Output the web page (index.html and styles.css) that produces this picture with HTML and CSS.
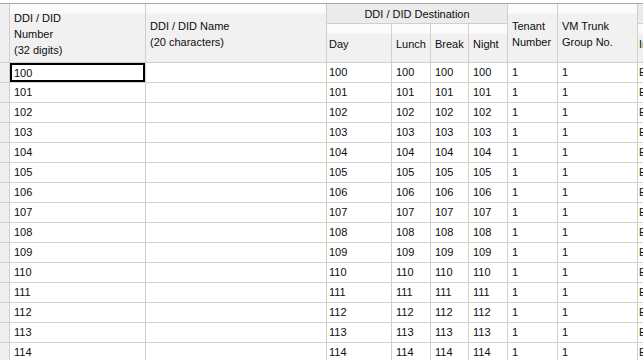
FILE: index.html
```html
<!DOCTYPE html>
<html>
<head>
<meta charset="utf-8">
<link rel="stylesheet" href="styles.css">
</head>
<body>
<div class="sheet">
  <div class="gut hdr span2"></div>
  <div class="hdr span2">DDI / DID<br>Number<br>(32 digits)</div>
  <div class="hdr span2">DDI / DID Name<br>(20 characters)</div>
  <div class="grp span4c">DDI / DID Destination</div>
  <div class="hdr span2">Tenant<br>Number</div>
  <div class="hdr span2">VM Trunk<br>Group No.</div>
  <div class="grp">&nbsp;</div>
  <div class="hdr day">Day</div>
  <div class="hdr">Lunch</div>
  <div class="hdr">Break</div>
  <div class="hdr">Night</div>
  <div class="hdr last">Intercept</div>

  <div class="gut"></div><div class="c sel">100</div><div class="c"></div><div class="c day">100</div><div class="c">100</div><div class="c">100</div><div class="c">100</div><div class="c">1</div><div class="c">1</div><div class="c last">Enable</div>
  <div class="gut"></div><div class="c">101</div><div class="c"></div><div class="c day">101</div><div class="c">101</div><div class="c">101</div><div class="c">101</div><div class="c">1</div><div class="c">1</div><div class="c last">Enable</div>
  <div class="gut"></div><div class="c">102</div><div class="c"></div><div class="c day">102</div><div class="c">102</div><div class="c">102</div><div class="c">102</div><div class="c">1</div><div class="c">1</div><div class="c last">Enable</div>
  <div class="gut"></div><div class="c">103</div><div class="c"></div><div class="c day">103</div><div class="c">103</div><div class="c">103</div><div class="c">103</div><div class="c">1</div><div class="c">1</div><div class="c last">Enable</div>
  <div class="gut"></div><div class="c">104</div><div class="c"></div><div class="c day">104</div><div class="c">104</div><div class="c">104</div><div class="c">104</div><div class="c">1</div><div class="c">1</div><div class="c last">Enable</div>
  <div class="gut"></div><div class="c">105</div><div class="c"></div><div class="c day">105</div><div class="c">105</div><div class="c">105</div><div class="c">105</div><div class="c">1</div><div class="c">1</div><div class="c last">Enable</div>
  <div class="gut"></div><div class="c">106</div><div class="c"></div><div class="c day">106</div><div class="c">106</div><div class="c">106</div><div class="c">106</div><div class="c">1</div><div class="c">1</div><div class="c last">Enable</div>
  <div class="gut"></div><div class="c">107</div><div class="c"></div><div class="c day">107</div><div class="c">107</div><div class="c">107</div><div class="c">107</div><div class="c">1</div><div class="c">1</div><div class="c last">Enable</div>
  <div class="gut"></div><div class="c">108</div><div class="c"></div><div class="c day">108</div><div class="c">108</div><div class="c">108</div><div class="c">108</div><div class="c">1</div><div class="c">1</div><div class="c last">Enable</div>
  <div class="gut"></div><div class="c">109</div><div class="c"></div><div class="c day">109</div><div class="c">109</div><div class="c">109</div><div class="c">109</div><div class="c">1</div><div class="c">1</div><div class="c last">Enable</div>
  <div class="gut"></div><div class="c">110</div><div class="c"></div><div class="c day">110</div><div class="c">110</div><div class="c">110</div><div class="c">110</div><div class="c">1</div><div class="c">1</div><div class="c last">Enable</div>
  <div class="gut"></div><div class="c">111</div><div class="c"></div><div class="c day">111</div><div class="c">111</div><div class="c">111</div><div class="c">111</div><div class="c">1</div><div class="c">1</div><div class="c last">Enable</div>
  <div class="gut"></div><div class="c">112</div><div class="c"></div><div class="c day">112</div><div class="c">112</div><div class="c">112</div><div class="c">112</div><div class="c">1</div><div class="c">1</div><div class="c last">Enable</div>
  <div class="gut"></div><div class="c">113</div><div class="c"></div><div class="c day">113</div><div class="c">113</div><div class="c">113</div><div class="c">113</div><div class="c">1</div><div class="c">1</div><div class="c last">Enable</div>
  <div class="gut"></div><div class="c">114</div><div class="c"></div><div class="c day">114</div><div class="c">114</div><div class="c">114</div><div class="c">114</div><div class="c">1</div><div class="c">1</div><div class="c last">Enable</div>
  <div class="gut"></div><div class="c">115</div><div class="c"></div><div class="c day">115</div><div class="c">115</div><div class="c">115</div><div class="c">115</div><div class="c">1</div><div class="c">1</div><div class="c last">Enable</div>
</div>
</body>
</html>
```
FILE: styles.css
```css
html, body {
  margin: 0;
  padding: 0;
  background: #ffffff;
  overflow: hidden;
}

.sheet {
  margin-top: 3px;
  border-top: 1px solid #a9a9a9;
  display: grid;
  grid-template-columns: 9px 135px 180px 64px 38px 37px 38px 49px 79px 90px;
  grid-template-rows: 19px 38px repeat(16, 19px);
  gap: 1px;
  background: #cfcfcf;
  width: max-content;
  font-family: "Liberation Sans", Arial, sans-serif;
  font-size: 11px;
  color: #0d0d0d;
}

.hdr {
  background: linear-gradient(#fbfbfb 0, #fbfbfb 9px, #f1f1f1 10px, #f1f1f1 100%);
  display: flex;
  align-items: center;
  padding: 1px 4px 0;
  line-height: 16px;
  white-space: nowrap;
  overflow: hidden;
}

.span2 {
  grid-row: span 2;
}

.span4c {
  grid-column: span 4;
}

.grp {
  background: #ebebeb;
  display: flex;
  align-items: center;
  justify-content: center;
  white-space: nowrap;
  overflow: hidden;
}

.gut {
  background: #efefef;
  padding: 0;
}

.c {
  background: #ffffff;
  padding: 0 4px;
  line-height: 19px;
  white-space: nowrap;
  overflow: hidden;
}

.day {
  padding-left: 2px;
}

.last {
  padding-left: 1px;
}

.sel {
  box-shadow: inset 0 0 0 2px #000000;
  line-height: 20px;
}
```
